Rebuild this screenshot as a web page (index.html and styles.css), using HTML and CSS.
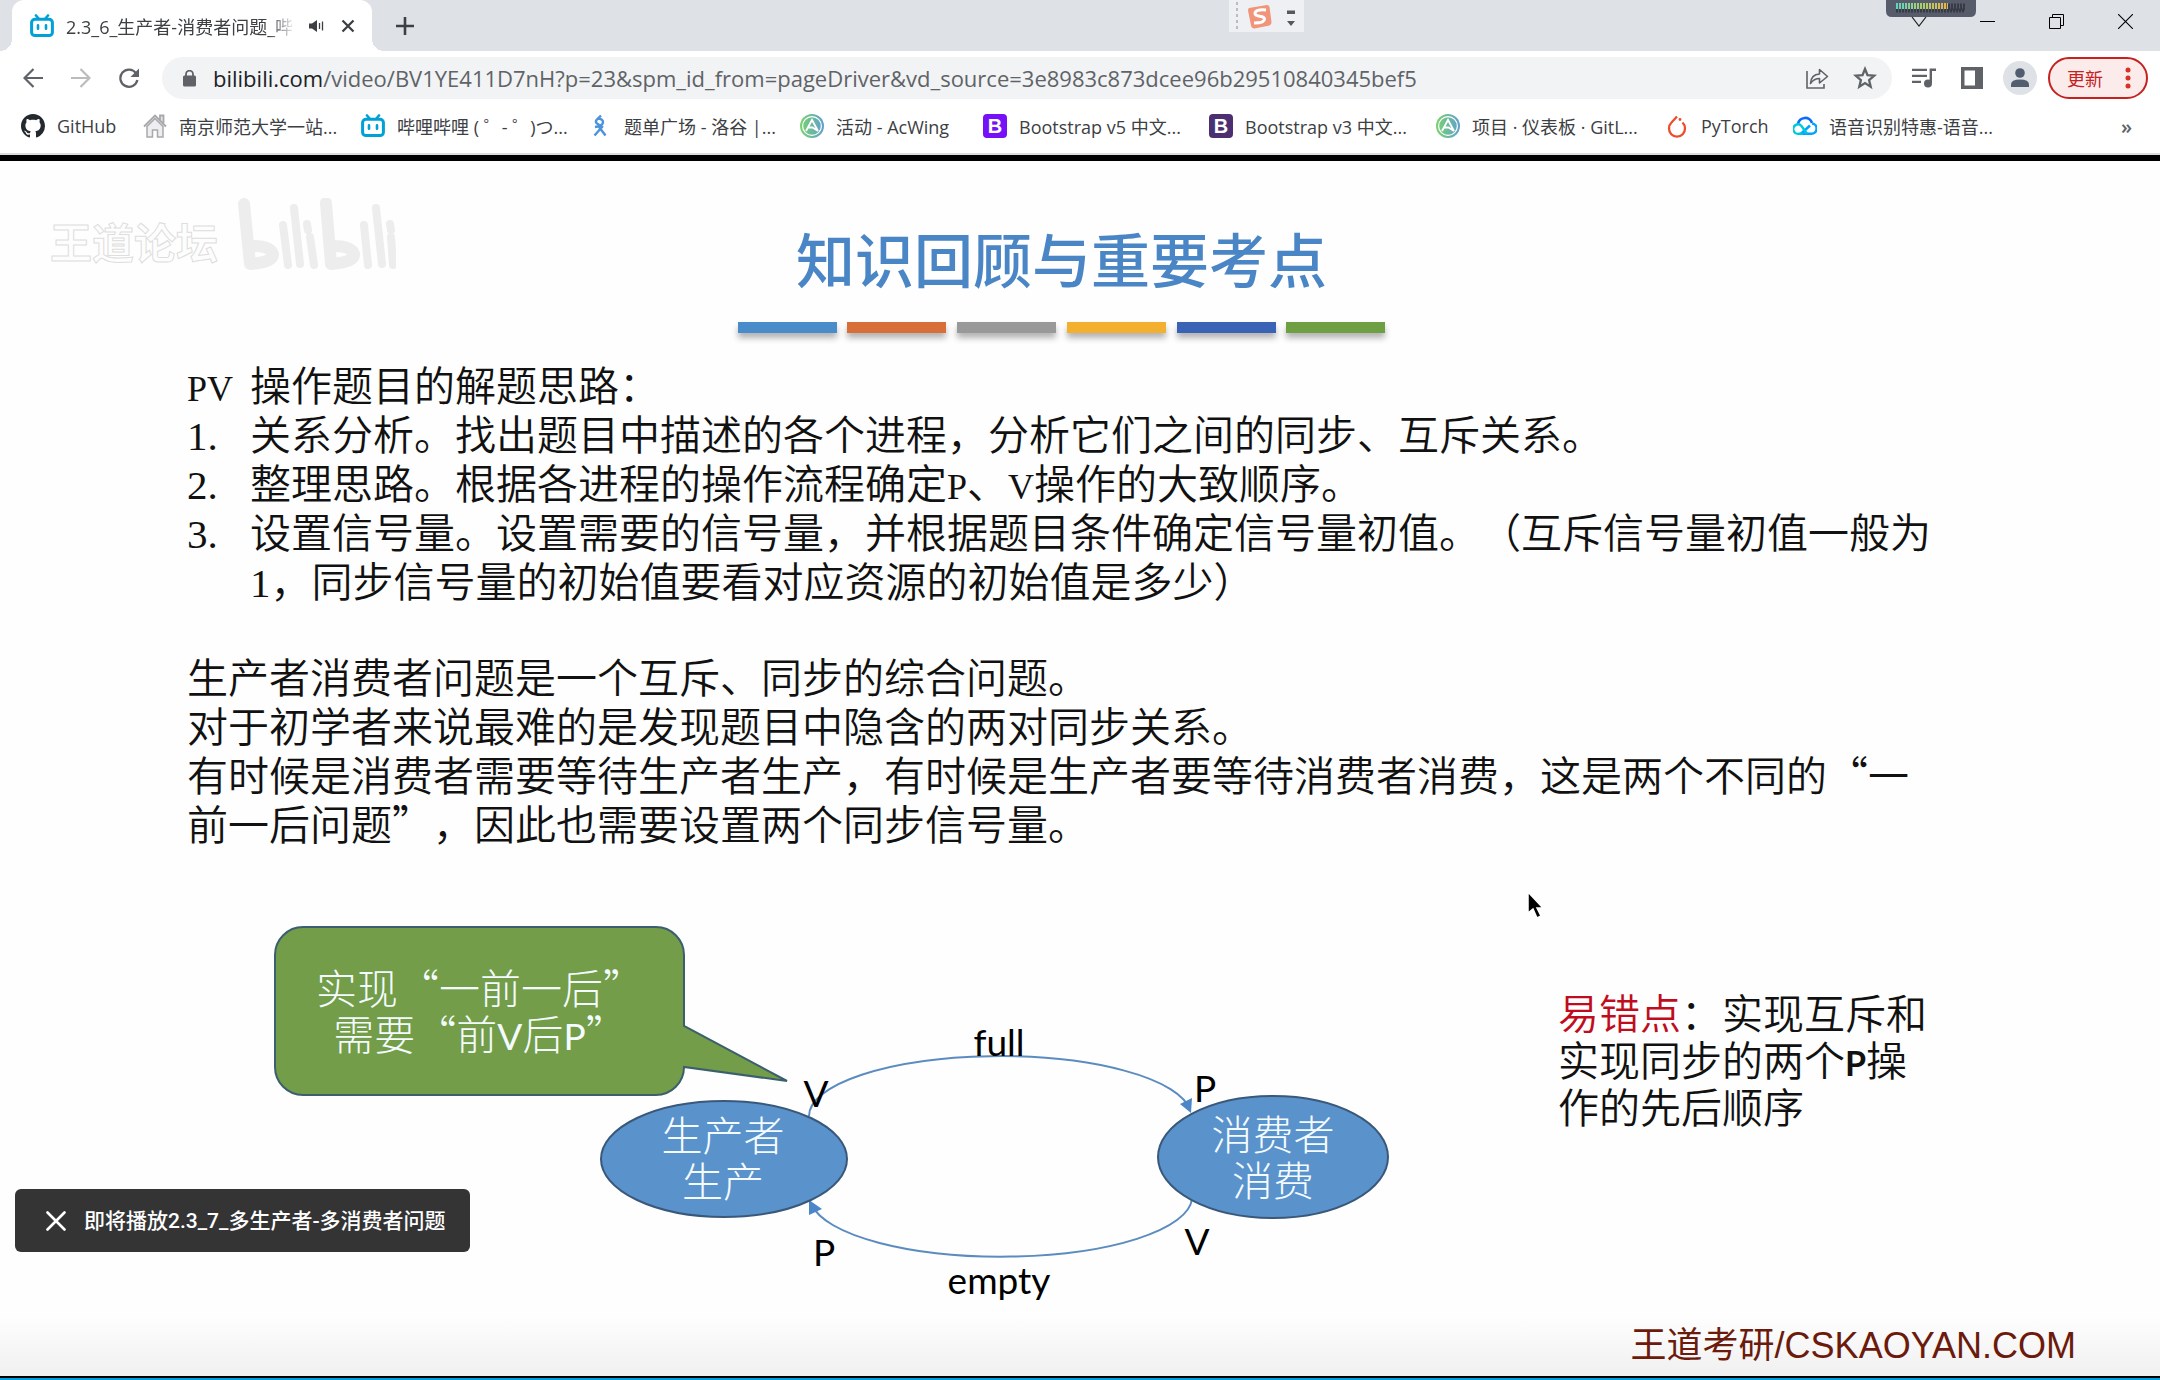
FILE: index.html
```html
<!DOCTYPE html>
<html lang="zh-CN">
<head>
<meta charset="utf-8">
<title>2.3_6_生产者-消费者问题_哔哩哔哩</title>
<link rel="stylesheet" href="styles.css">
</head>
<body>
<svg class="defs" width="0" height="0" aria-hidden="true">
  <symbol id="bili" viewBox="0 0 24 24">
    <path d="M6 1.5 9 5M18 1.5 15 5" stroke="#00a1d6" stroke-width="2.6" stroke-linecap="round"/>
    <rect x="1.6" y="5.2" width="20.8" height="16.4" rx="3.4" fill="#fff" stroke="#00a1d6" stroke-width="3"/>
    <path d="M8 11.4v3.4M16 11.4v3.4" stroke="#00a1d6" stroke-width="2.6" stroke-linecap="round"/>
  </symbol>
  <symbol id="acwing" viewBox="0 0 24 24">
    <linearGradient id="acg" x1="0" x2="1"><stop offset="0" stop-color="#7bd36c"/><stop offset="1" stop-color="#5f9fd0"/></linearGradient>
    <circle cx="12" cy="12" r="12" fill="url(#acg)"/>
    <circle cx="12" cy="12" r="9.4" fill="none" stroke="#fff" stroke-width="1.2"/>
    <path d="M6 17 12 6l6 11M8.500 13.500h4l5.500 3.500" fill="none" stroke="#fff" stroke-width="1.8"/>
  </symbol>
</svg>

<header class="chrome">
  <div class="tabstrip">
    <div class="tab">
      <svg class="fav"><use href="#bili"/></svg>
      <span class="tab-title">2.3_6_生产者-消费者问题_哔</span>
      <button class="tab-btn" aria-label="静音"><svg width="16" height="16" viewBox="0 0 16 16"><path d="M1 5.500h3L9 2v12L4 10.500H1z" fill="#3c4043"/><path d="M11.500 5v6M14.500 3.500v9" stroke="#3c4043" stroke-width="1.300"/></svg></button>
      <button class="tab-btn" aria-label="关闭标签页"><svg width="14" height="14" viewBox="0 0 14 14"><path d="M1.500 1.500l11 11M12.500 1.500l-11 11" stroke="#3c4043" stroke-width="2.300"/></svg></button>
    </div>
    <button class="new-tab" aria-label="新标签页"><svg width="18" height="18" viewBox="0 0 18 18"><path d="M9 0v18M0 9h18" stroke="#3c4043" stroke-width="2.600"/></svg></button>
    <div class="win-controls">
      <button aria-label="搜索标签页"><svg width="16" height="10" viewBox="0 0 16 10"><path d="M1 0l7 9 7-9" fill="none" stroke="#222" stroke-width="1.200"/></svg></button>
      <button aria-label="最小化"><svg width="15" height="15" viewBox="0 0 15 15"><path d="M0 7.500h15" stroke="#000" stroke-width="1"/></svg></button>
      <button aria-label="还原"><svg width="15" height="15" viewBox="0 0 15 15"><path d="M.5 3.500h11v11H.5zM3.500 3.500v-3h11v11h-3" fill="none" stroke="#000" stroke-width="1"/></svg></button>
      <button aria-label="关闭"><svg width="15" height="15" viewBox="0 0 15 15"><path d="M0 0l15 15M15 0L0 15" stroke="#000" stroke-width="1.100"/></svg></button>
    </div>
    <div class="ime">
      <svg width="75" height="32" viewBox="0 0 75 32">
        <path d="M8 2v30" stroke="#b9bcc2" stroke-width="2" stroke-dasharray="3 3"/>
        <path d="M20 8l18-3q2 0 2.500 2l2 15q0 3-2 3.500l-15 3q-3 0-3.500-3l-3-15q0-2 1-2.500z" fill="#f0957a"/>
        <path d="M37 10q-11-1-11 3.500c0 4 9.500 1.500 9.500 5.500q0 4-10.500 4" fill="none" stroke="#fff" stroke-width="3"/>
        <path d="M58 10.500h8v3.500h-8zM58 21h8l-4 5z" fill="#55585e"/>
      </svg>
    </div>
    <div class="meter">
      <svg width="90" height="18" viewBox="0 0 90 18">
        <linearGradient id="mg" gradientUnits="userSpaceOnUse" x1="10" x2="62" y1="0" y2="0"><stop offset="0" stop-color="#5fd3c4"/><stop offset=".5" stop-color="#a8cf6a"/><stop offset="1" stop-color="#e8b34c"/></linearGradient>
        <path d="M0 0h90v11q0 6-6 6H6q-6 0-6-6z" fill="#565c69"/>
        <path d="M10 10.500h69" stroke="#373b47" stroke-width="4" stroke-dasharray="2 1"/>
        <path d="M62 7h17" stroke="#373b47" stroke-width="7" stroke-dasharray="2 1"/>
        <path d="M10 6h52" stroke="url(#mg)" stroke-width="6" stroke-dasharray="2 1"/>
      </svg>
    </div>
  </div>

  <div class="toolbar">
    <nav class="nav">
      <button aria-label="后退"><svg width="20" height="20" viewBox="0 0 20 20"><path d="M20 10H2M10.500 1L1.500 10l9 9" fill="none" stroke="#5f6368" stroke-width="2.200"/></svg></button>
      <button aria-label="前进"><svg width="20" height="20" viewBox="0 0 20 20"><path d="M0 10h18M9.500 1l9 9-9 9" fill="none" stroke="#babcbe" stroke-width="2.200"/></svg></button>
      <button aria-label="重新加载"><svg width="20" height="20" viewBox="0 0 20 20"><path d="M17 5.200A8.600 8.600 0 1 0 18.400 12" fill="none" stroke="#5f6368" stroke-width="2.300"/><path d="M20 .5V9h-8.500z" fill="#5f6368"/></svg></button>
    </nav>
    <div class="omnibox">
      <svg class="lock" width="13" height="17" viewBox="0 0 13 17"><rect x="0" y="5.500" width="13" height="11" rx="1.500" fill="#5f6368"/><path d="M3 7V4.200a3.500 3.500 0 0 1 7 0V7" fill="none" stroke="#5f6368" stroke-width="1.800"/></svg>
      <label class="host" for="url">bilibili.com</label>
      <input class="url" id="url" type="text" value="/video/BV1YE411D7nH?p=23&amp;spm_id_from=pageDriver&amp;vd_source=3e8983c873dcee96b29510840345bef5">
      <button aria-label="分享"><svg width="24" height="24" viewBox="0 0 24 24"><path d="M2 5v17h17v-4" fill="none" stroke="#5f6368" stroke-width="1.600"/><path d="M5.500 17.500q.5-9 9-9.500V3.500l8 7-8 6.500v-4.500q-5.500 0-9 5z" fill="none" stroke="#5f6368" stroke-width="1.600" stroke-linejoin="round"/></svg></button>
      <button aria-label="收藏"><svg width="24" height="24" viewBox="0 0 24 24"><path d="M12 3l2.500 6.200 6.700.5-5.100 4.400 1.600 6.600-5.700-3.600-5.700 3.600 1.600-6.600L2.800 9.700l6.700-.5z" fill="none" stroke="#5f6368" stroke-width="2.300"/></svg></button>
    </div>
    <div class="tools">
      <button aria-label="媒体"><svg width="24" height="20" viewBox="0 0 24 20"><path d="M0 1.800h15M0 7.800h15M0 13.800h9" stroke="#5f6368" stroke-width="2.200"/><path d="M18.800 15V1.800H24" fill="none" stroke="#5f6368" stroke-width="2.400"/><circle cx="16" cy="15.500" r="4" fill="#5f6368"/></svg></button>
      <button aria-label="侧边栏"><svg width="22" height="22" viewBox="0 0 22 22"><path d="M0 0h22v22H0zM3.500 3.500v15H14v-15z" fill="#5f6368" fill-rule="evenodd"/></svg></button>
      <button aria-label="用户"><svg width="34" height="34" viewBox="0 0 34 34"><circle cx="17" cy="17" r="17" fill="#dee1e6"/><circle cx="17" cy="12" r="4.800" fill="#535d70"/><path d="M8 26v-2.500q0-5 9-5t9 5V26z" fill="#535d70"/></svg></button>
      <button class="update">更新<svg width="6" height="22" viewBox="0 0 6 22"><g fill="#d93025"><circle cx="3" cy="3" r="2.500"/><circle cx="3" cy="11" r="2.500"/><circle cx="3" cy="19" r="2.500"/></g></svg></button>
    </div>
  </div>

  <nav class="bookmarks">
    <a href="#"><svg class="fav" viewBox="0 0 16 16"><path fill="#24292f" d="M8 0C3.580 0 0 3.580 0 8c0 3.540 2.290 6.530 5.470 7.590.4.070.55-.17.55-.38 0-.19-.01-.82-.01-1.490-2.010.37-2.530-.49-2.690-.94-.09-.23-.48-.94-.82-1.130-.28-.15-.68-.52-.01-.53.63-.01 1.080.58 1.230.82.72 1.210 1.870.87 2.330.66.070-.52.280-.87.510-1.070-1.780-.2-3.640-.89-3.640-3.950 0-.87.310-1.590.820-2.150-.080-.2-.360-1.020.080-2.120 0 0 .67-.21 2.200.82.640-.18 1.320-.27 2-.27s1.360.09 2 .27c1.530-1.040 2.200-.82 2.200-.82.440 1.100.160 1.920.080 2.120.510.560.820 1.270.820 2.150 0 3.070-1.870 3.750-3.650 3.950.290.250.540.730.540 1.480 0 1.070-.010 1.930-.010 2.200 0 .210.150.460.550.380A8.010 8.010 0 0 0 16 8c0-4.420-3.580-8-8-8z"/></svg><span>GitHub</span></a>
    <a href="#"><svg class="fav" viewBox="0 0 24 24"><path d="M1 12.500L12 1.500l11 11M17 6V1.500h3.500V9" fill="#e4e4e6" stroke="#a9a9ad" stroke-width="1.800"/><path d="M4 12.500l8-8 8 8V23h-5.500v-7h-5v7H4z" fill="#eeeef0" stroke="#a9a9ad" stroke-width="1.500"/></svg><span>南京师范大学一站...</span></a>
    <a href="#"><svg class="fav"><use href="#bili"/></svg><span>哔哩哔哩 ( ゜- ゜)つ...</span></a>
    <a href="#"><svg class="fav" viewBox="0 0 24 24"><path d="M13 1.500L8.500 6q-1.500 2 .5 3.500l5 3.500-7.500 8.500M9.500 4.500q6 .5 5.500 4t-8 4.500M11 13l6.500 8.500" fill="none" stroke="#4b93dc" stroke-width="2.400"/></svg><span>题单广场 - 洛谷 |...</span></a>
    <a href="#"><svg class="fav"><use href="#acwing"/></svg><span>活动 - AcWing</span></a>
    <a href="#"><b class="fav bs v5">B</b><span>Bootstrap v5 中文...</span></a>
    <a href="#"><b class="fav bs v3">B</b><span>Bootstrap v3 中文...</span></a>
    <a href="#"><svg class="fav"><use href="#acwing"/></svg><span>项目 · 仪表板 · GitL...</span></a>
    <a href="#"><svg class="fav" viewBox="0 0 24 24"><path d="M12 2.500L6.500 8.500a8 8.200 0 1 0 11 0" fill="none" stroke="#ee4c2c" stroke-width="2.300"/><circle cx="15" cy="5.500" r="1.400" fill="#ee4c2c"/></svg><span>PyTorch</span></a>
    <a href="#"><svg class="fav" viewBox="0 0 24 24"><path d="M5 10a7.200 7.200 0 0 1 14-1" fill="none" stroke="#0a6cff" stroke-width="2.600"/><path d="M19 9.500a5 5 0 0 1-1 10.200H8L17 11.500" fill="none" stroke="#00a4ff" stroke-width="2.600" stroke-linejoin="round"/><path d="M14 19.700L8.500 12A4.700 4.700 0 1 0 6 19.700h4" fill="none" stroke="#00c8dc" stroke-width="2.400"/></svg><span>语音识别特惠-语音...</span></a>
    <button class="more" aria-label="更多书签">»</button>
  </nav>
</header>

<main class="slide">
  <div class="watermark">
    <span>王道论坛</span>
    <svg width="160" height="76" viewBox="0 0 160 76" aria-hidden="true">
      <g fill="none" stroke="#ededed" stroke-linecap="round" stroke-linejoin="round">
        <path d="M8 6l6 60q24-2 23-10-3-8-20-8" stroke-width="12"/>
        <path d="M47 27l5 40M58 10l6 56M71 26l1 6M74 39l4 28" stroke-width="8"/>
        <path d="M90 5l5 61q24-2 23-10-3-8-20-8" stroke-width="12"/>
        <path d="M128 27l4 40M140 10l6 56M154 26l1 6M155 39l2 28" stroke-width="8"/>
      </g>
    </svg>
  </div>

  <h1 class="title">知识回顾与重要考点</h1>
  <div class="rule"><i class="c1"></i><i class="c2"></i><i class="c3"></i><i class="c4"></i><i class="c5"></i><i class="c6"></i></div>

  <section class="text">
    <p><span class="lat lead">PV</span>操作题目的解题思路：</p>
    <ol>
      <li><span class="lat num">1.</span><span>关系分析。找出题目中描述的各个进程，分析它们之间的同步、互斥关系。</span></li>
      <li><span class="lat num">2.</span><span>整理思路。根据各进程的操作流程确定<span class="lat cap">P</span>、<span class="lat cap">V</span>操作的大致顺序。</span></li>
      <li><span class="lat num">3.</span><span>设置信号量。设置需要的信号量，并根据题目条件确定信号量初值。（互斥信号量初值一般为<span class="lat">1</span>，同步信号量的初始值要看对应资源的初始值是多少）</span></li>
    </ol>
  </section>
  <section class="text">
    <p>生产者消费者问题是一个互斥、同步的综合问题。</p>
    <p>对于初学者来说最难的是发现题目中隐含的两对同步关系。</p>
    <p>有时候是消费者需要等待生产者生产，有时候是生产者要等待消费者消费，这是两个不同的“一前一后问题”，因此也需要设置两个同步信号量。</p>
  </section>

  <div class="figure">
    <svg class="diagram" width="1220" height="390" viewBox="187 915 1220 390">
      <path d="M303 927H656a28 28 0 0 1 28 28V1026L787 1081 684 1067a28 28 0 0 1-28 28H303a28 28 0 0 1-28-28V955a28 28 0 0 1 28-28z" fill="#739d48" stroke="#3b5f6e" stroke-width="2"/>
      <path d="M809 1116A191 60 0 0 1 1190 1110M1192 1199A191 60 0 0 1 812 1205" fill="none" stroke="#5b8cbf" stroke-width="2"/>
      <path d="M1191 1113l-11-9 12-6zM809 1200v15l13-6z" fill="#4a86c8"/>
      <ellipse cx="724" cy="1159" rx="123" ry="58" fill="#5a92cb" stroke="#39587a" stroke-width="2"/>
      <ellipse cx="1273" cy="1157" rx="115" ry="61" fill="#5a92cb" stroke="#39587a" stroke-width="2"/>
      <g class="cjk">
        <text x="480" y="1004">实现“一前一后”</text>
        <text x="480" y="1050">需要“前<tspan class="lato">V</tspan>后<tspan class="lato">P</tspan>”</text>
        <text x="723" y="1151">生产者</text>
        <text x="723" y="1197">生产</text>
        <text x="1273" y="1150">消费者</text>
        <text x="1273" y="1196">消费</text>
      </g>
      <g class="tag">
        <text x="816" y="1107">V</text>
        <text x="824" y="1266">P</text>
        <text x="1205" y="1102">P</text>
        <text x="1197" y="1255">V</text>
        <text x="999" y="1056">full</text>
        <text x="999" y="1294">empty</text>
      </g>
    </svg>
    <p class="note"><em>易错点</em>：实现互斥和<br>实现同步的两个<span class="p">P</span>操<br>作的先后顺序</p>
  </div>

  <footer class="credit">王道考研/CSKAOYAN.COM</footer>

  <svg class="cursor" width="20" height="30" viewBox="0 0 20 30"><path d="M2 1v21l5-4 4 9 4-2-4-8h6z" fill="#000" stroke="#fff" stroke-width="1.500"/></svg>

  <div class="toast">
    <button aria-label="取消"><svg width="20" height="20" viewBox="0 0 20 20"><path d="M1.500 1.500l17 17M18.500 1.500l-17 17" stroke="#fff" stroke-width="2.600" stroke-linecap="round"/></svg></button>
    <span>即将播放2.3_7_多生产者-多消费者问题</span>
  </div>
</main>
</body>
</html>
```
FILE: styles.css
```css
* { box-sizing: border-box; }
body {
  margin: 0;
  min-height: 100vh;
  display: flex;
  flex-direction: column;
  background: #fff;
  font-family: "Open Sans", "Noto Sans CJK SC", sans-serif;
  color: #3c4043;
  text-spacing-trim: space-all;
}
.defs { position: absolute; }
button {
  display: flex;
  align-items: center;
  justify-content: center;
  padding: 0;
  border: 0;
  background: none;
  font: inherit;
  color: inherit;
}
svg { display: block; flex: none; }
.fav { width: 24px; height: 24px; flex: none; }

/* tab strip */
.tabstrip {
  position: relative;
  display: flex;
  height: 51px;
  padding-left: 12px;
  background: #dee1e6;
}
.tab {
  position: relative;
  display: flex;
  align-items: center;
  width: 360px;
  padding: 0 12px 0 18px;
  border-radius: 12px 12px 0 0;
  background: #fff;
}
.tab::before, .tab::after {
  content: "";
  position: absolute;
  bottom: 0;
  width: 12px;
  height: 12px;
}
.tab::before { left: -12px; background: radial-gradient(circle at 0 0, transparent 12px, #fff 12px); }
.tab::after { right: -12px; background: radial-gradient(circle at 100% 0, transparent 12px, #fff 12px); }
.tab-title {
  flex: 1;
  margin-left: 12px;
  white-space: nowrap;
  font-size: 18px;
  mask-image: linear-gradient(90deg, #000 88%, transparent 100%);
}
.tab-btn { width: 24px; height: 24px; margin-left: 8px; }
.new-tab { width: 42px; margin-left: 12px; }
.win-controls { display: flex; margin-left: auto; }
.win-controls button { width: 69px; height: 43px; }
.ime {
  position: absolute;
  top: 0;
  right: 856px;
  height: 32px;
  background: #eff0f3;
}
.meter { position: absolute; top: 0; right: 184px; }

/* toolbar */
.toolbar {
  display: flex;
  align-items: center;
  height: 54px;
  padding: 0 12px 0 9px;
}
.nav { display: flex; margin-right: 9px; }
.nav button { width: 48px; height: 42px; }
.omnibox {
  flex: 1;
  display: flex;
  align-items: center;
  height: 42px;
  padding: 0 15px 0 21px;
  border-radius: 21px;
  background: #f1f3f4;
  font-size: 22px;
  line-height: 28px;
}
.omnibox button { width: 24px; height: 24px; margin-left: 24px; }
.host { margin-left: 17px; color: #202124; }
.url {
  flex: 1;
  min-width: 0;
  padding: 0;
  border: 0;
  outline: 0;
  background: none;
  font: inherit;
  color: #5f6368;
}
.tools { display: flex; align-items: center; margin-left: 15px; gap: 14px; }
.tools button { width: 34px; height: 34px; }
.tools .update {
  width: 100px;
  height: 42px;
  gap: 22px;
  margin-left: -3px;
  padding-left: 2px;
  border: 2px solid #c5221f;
  border-radius: 21px;
  background: #fbeceb;
  color: #c5221f;
  font-size: 18px;
}

/* bookmarks */
.bookmarks {
  display: grid;
  grid-template-columns: 122px 218px 227px 212px 183px 226px 227px 229px 128px 1fr auto;
  align-items: center;
  height: 50px;
  padding: 0 28px 6px 21px;
  border-bottom: 2px solid #dadce0;
  font-size: 18px;
  white-space: nowrap;
}
.bookmarks a {
  display: flex;
  align-items: center;
  gap: 12px;
  color: inherit;
  text-decoration: none;
}
.bs {
  border-radius: 4px;
  color: #fff;
  font: bold 20px/24px "Liberation Sans", sans-serif;
  text-align: center;
}
.v5 { background: #7611f7; }
.v3 { background: #4c2f71; }
.more { font-size: 20px; font-weight: 600; color: #5f6368; }

/* video slide */
.slide {
  position: relative;
  flex: 1;
  padding: 67px 224px 8px 187px;
  border-top: 6px solid #000;
  border-bottom: 2px solid #000;
  box-shadow: 0 2px #00a1e0;
  margin-bottom: 2px;
  background: linear-gradient(to top, #f0f0f0, #fefefe 60px);
  color: #111;
  font-family: "Noto Sans CJK SC", sans-serif;
}
.watermark {
  position: absolute;
  top: 37px;
  left: 50px;
  display: flex;
  align-items: center;
  gap: 18px;
  color: #fdfdfd;
  font-size: 42px;
  font-weight: 700;
  -webkit-text-stroke: 1px #dedede;
}
.watermark span { padding-top: 8px; }
.title {
  margin: 0;
  color: #4a86c5;
  font-size: 59px;
  font-weight: 500;
  line-height: 60px;
  text-align: center;
}
.rule {
  display: flex;
  justify-content: space-between;
  width: 648px;
  margin: 34px auto 26px;
}
.rule i { width: 99px; height: 11px; box-shadow: 0 5px 6px rgba(0, 0, 0, .3); }
.c1 { background: #4a8bca; }
.c2 { background: #d96f38; }
.c3 { background: #999; }
.c4 { background: #f3b02e; }
.c5 { background: #3a62b5; }
.c6 { background: #6f9f43; }
.text { font-size: 41px; font-weight: 350; line-height: 49px; }
.text + .text { margin-top: 47px; }
.text p, .text ol { margin: 0; padding: 0; list-style: none; }
.text li { display: flex; align-items: baseline; }
.lat { font-family: "Liberation Serif", serif; font-weight: 400; line-height: 1; }
.cap, .lead { font-size: 36px; }
.lead { display: inline-block; width: 63px; }
.num { flex: none; width: 63px; }
.figure { display: flex; gap: 151px; margin-top: 68px; }
.cjk { fill: #f4fbff; font-size: 41px; font-weight: 300; text-anchor: middle; }
.lato { font-family: Lato, sans-serif; font-size: 37px; font-weight: 400; }
.tag { fill: #000; font-family: Lato, sans-serif; font-size: 37px; text-anchor: middle; }
.note {
  margin: 73px 0 0;
  font-size: 41px;
  font-weight: 350;
  line-height: 47px;
  white-space: nowrap;
}
.note em { color: #c00d1e; font-style: normal; }
.p { font: bold 34px/1 Lato, sans-serif; }
.credit {
  margin: 19px -140px 0 0;
  color: #6b1a0c;
  font: 36px/44px "Liberation Sans", "Noto Sans CJK SC", sans-serif;
  text-align: right;
}
.cursor { position: absolute; top: 730px; left: 1526px; }
.toast {
  position: absolute;
  left: 15px;
  bottom: 124px;
  display: flex;
  align-items: center;
  gap: 18px;
  height: 63px;
  padding: 0 24px 0 31px;
  border-radius: 6px;
  background: #343434;
  color: #fff;
  font: 500 21px/30px Roboto, "Noto Sans CJK SC", sans-serif;
}
```
